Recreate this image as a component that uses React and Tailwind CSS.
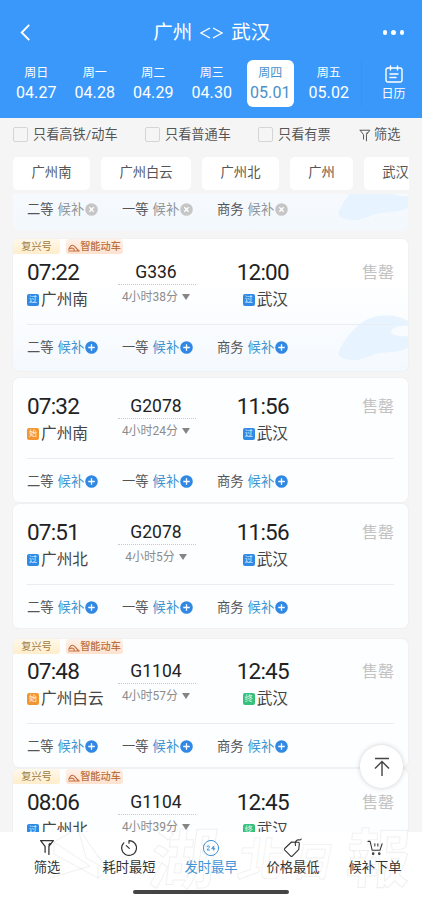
import React from 'react';

const DATES = [
  { day: '周日', date: '04.27' },
  { day: '周一', date: '04.28' },
  { day: '周二', date: '04.29' },
  { day: '周三', date: '04.30' },
  { day: '周四', date: '05.01', active: true },
  { day: '周五', date: '05.02' },
];

const STATIONS = [
  { name: '广州南', width: 'w-[77px]' },
  { name: '广州白云', width: 'w-[90px]' },
  { name: '广州北', width: 'w-[77px]' },
  { name: '广州', width: 'w-[63px]' },
  { name: '武汉', width: 'w-[63px]' },
];

const TRAINS = [
  { no: 'G336', dep: '07:22', arr: '12:00', from: '广州南', to: '武汉', fromTag: '过', toTag: '过', time: '4小时38分', smart: true, tinted: true, box: 'mt-[8px] h-[132px] pt-[19px]' },
  { no: 'G2078', dep: '07:32', arr: '11:56', from: '广州南', to: '武汉', fromTag: '始', toTag: '过', time: '4小时24分', box: 'mt-[7px] h-[124px] pt-[14px]' },
  { no: 'G2078', dep: '07:51', arr: '11:56', from: '广州北', to: '武汉', fromTag: '过', toTag: '过', time: '4小时5分', box: 'mt-[2px] h-[124px] pt-[14px]' },
  { no: 'G1104', dep: '07:48', arr: '12:45', from: '广州白云', to: '武汉', fromTag: '始', toTag: '终', time: '4小时57分', smart: true, box: 'mt-[11px] h-[128px] pt-[18px]' },
  { no: 'G1104', dep: '08:06', arr: '12:45', from: '广州北', to: '武汉', fromTag: '过', toTag: '终', time: '4小时39分', smart: true, box: 'mt-[2px] h-[128px] pt-[19px]' },
];

const TAG_COLORS = {
  过: 'bg-[#2f8ae6]',
  始: 'bg-[#f39531]',
  终: 'bg-[#35c17c]',
};

const Funnel = ({ className }) => (
  <svg viewBox="0 0 14 16" className={className} fill="none" stroke="currentColor" strokeWidth="1.2" strokeLinejoin="round" strokeLinecap="round">
    <path d="M1 1.5h12L8.8 7v7.5M1 1.5 5.2 7v5.5M9.8 4.2 8.8 5.5" />
  </svg>
);

const TrainArt = () => (
  <svg viewBox="0 0 70 50" className="absolute bottom-[8px] right-0 h-[50px] w-[70px]">
    <path
      d="M1 38C7 25 20 8 36 4c12-3 26-1 34 4v5c-6-1-12 0-17 4-1 5 9 7 17 6v12c-7 4-17 4-27 5-9 1-19 8-28 7C5 47-2 43 1 38Z"
      fill="#e7f3fe"
    />
  </svg>
);

const Seats = ({ closed }) => (
  <div className="flex h-5 items-center text-[13.3px] text-[#555]">
    {['二等', '一等', '商务'].map((seat) => (
      <div key={seat} className="flex w-[95px] items-center">
        <span>{seat}</span>
        <span className={`ml-1 ${closed ? 'text-[#919497]' : 'text-[#3d93d0]'}`}>候补</span>
        <svg viewBox="0 0 12 12" className="mb-[2px] ml-[0.5px] h-[13px] w-[13px]">
          <circle cx="6" cy="6" r="5.8" fill={closed ? '#c6c6c6' : '#3088e4'} />
          <path d={closed ? 'M4 4l4 4M8 4l-4 4' : 'M6 3v6M3 6h6'} stroke="#fff" strokeWidth="1.2" />
        </svg>
      </div>
    ))}
  </div>
);

const Place = ({ tag, name }) => (
  <div className="flex h-[27px] items-center gap-[2px] text-[15.7px] text-[#444]">
    <span className={`flex h-3 w-3 items-center justify-center rounded-[2px] text-[8px] leading-none text-white/90 ${TAG_COLORS[tag]}`}>
      {tag}
    </span>
    <span>{name}</span>
  </div>
);

const TrainCard = ({ train }) => (
  <div
    className={`relative shrink-0 overflow-hidden rounded-[6px] px-[14px] shadow-[0_0_2px_rgba(0,0,0,0.07)] ${train.box} ${
      train.tinted ? 'bg-linear-to-b from-white from-30% to-[#f4f9fe]' : 'bg-[#fcfeff]'
    }`}
  >
    {train.tinted && <TrainArt />}
    {train.smart && (
      <div className="absolute left-0 top-0 flex h-[15px] items-center gap-[6px] text-[10.2px] leading-[15px]">
        <span className="h-full w-[47px] rounded-r-[3px] bg-linear-to-b from-[#fff8e8] to-[#ffedcc] text-center text-[#9a7a45]">复兴号</span>
        <span className="flex h-full w-[57px] items-center justify-center rounded-[3px] bg-linear-to-b from-[#fff1e8] to-[#fee2cf] font-medium text-[#bd713d]">
          <svg viewBox="0 0 12 8" className="mt-[3px] h-[8px] w-[12px]" fill="none" stroke="#c26a38" strokeWidth="1.1" strokeLinecap="round">
            <path d="M.8 5.500C1.500 3 2.800 1 4.800 1.200 7 1.400 7.500 4.500 11 6.800M2 4.500c2-.8 4-.3 4.200 1.500M.8 7h10.400" />
          </svg>
          智能动车
        </span>
      </div>
    )}
    <div className="relative flex h-[66px]">
      <div className="w-[91px] whitespace-nowrap">
        <div className="h-7 text-[22.5px] leading-7 tracking-[-0.8px] text-[#222]">{train.dep}</div>
        <Place tag={train.fromTag} name={train.from} />
      </div>
      <div className="flex w-[78px] flex-col items-center">
        <div className="h-[27px] w-full border-b border-dotted border-[#c9c9c9] pr-[2px] pt-[1px] text-center text-[17.5px] leading-[26px] text-[#222]">{train.no}</div>
        <div className="flex h-6 items-center gap-1 pr-[2px] text-[12px] text-[#8c8c8c]">
          {train.time}
          <svg viewBox="0 0 8 6" className="h-[6px] w-[8px]"><path d="M0 0h8L4 6Z" fill="#858585" /></svg>
        </div>
      </div>
      <div className="flex w-[92px] flex-col items-end">
        <div className="-mr-[0.8px] h-7 text-[22.5px] leading-7 tracking-[-0.8px] text-[#222]">{train.arr}</div>
        <Place tag={train.toTag} name={train.to} />
      </div>
      <div className="ml-auto pt-[3px] text-[16px] leading-6 text-[#c2c2c2]">售罄</div>
    </div>
    <div className="relative h-px bg-[#e9edf0]" />
    <div className="relative mt-[13px]">
      <Seats />
    </div>
  </div>
);

const TABS = [
  { label: '筛选', icon: <Funnel className="h-[17px] w-[16px]" /> },
  {
    label: '耗时最短',
    icon: (
      <svg viewBox="0 0 18 18" className="h-[18px] w-[18px]" fill="none" stroke="currentColor" strokeWidth="1.2" strokeLinecap="round">
        <path d="M9 1.6v2.6M9 1.6A7.4 7.4 0 1 1 3.8 3.8M6.3 6.6l3 2.8" />
      </svg>
    ),
  },
  {
    label: '发时最早',
    active: true,
    icon: (
      <svg viewBox="0 0 18 18" className="h-[18px] w-[18px]" fill="none" stroke="currentColor" strokeWidth="1" strokeLinecap="round">
        <circle cx="9" cy="9" r="7.6" />
        <path d="M5 7.6c.5-1.2 2.4-1 2.4.3C7.400 9 5.400 9.800 5 11h2.600M11.700 11V7l-2 2.800h3.200" />
      </svg>
    ),
  },
  {
    label: '价格最低',
    icon: (
      <svg viewBox="0 0 20 20" className="h-[20px] w-[20px]" fill="none" stroke="currentColor" strokeWidth="1.1" strokeLinecap="round" strokeLinejoin="round">
        <path d="M1.700 10.500 8.500 4l6.800.3q1 .1 1 1.200l-.5 5.800-6.500 6.800q-.8.700-1.500 0l-6-6q-.7-.8-.1-1.600ZM12.500 7.500c-.6-2.500 0-4.500 1.800-5.500 1.500-.6 3 .8 3.900-1" />
      </svg>
    ),
  },
  {
    label: '候补下单',
    icon: (
      <svg viewBox="0 0 18 18" className="h-[17px] w-[17px]" fill="none" stroke="currentColor" strokeWidth="1.1" strokeLinecap="round" strokeLinejoin="round">
        <path d="M1 2.500h2.300L5.500 12h8.200L16 5M8.300 5v2.500M11.500 5v2.500" />
        <circle cx="6.500" cy="15.500" r=".8" />
        <circle cx="13" cy="15.500" r=".8" />
      </svg>
    ),
  },
];

// faint outlined newspaper mark that lies over the tab bar
const Watermark = () => (
  <svg viewBox="0 0 422 80" className="pointer-events-none absolute bottom-0 left-0 h-[80px] w-full" fill="none" stroke="#777" strokeOpacity="0.11" strokeWidth="1">
    <path d="m54 22 24-14 30 42-10 8-44-24ZM78 8l8 30 22 12M54 22l36 24M98 58V46M50 58l40-12" />
    <g style={{ fontFamily: '"Noto Sans CJK TC", sans-serif', fontWeight: 700 }}>
      <text x="148" y="63" fontSize="66" transform="skewX(-8) translate(8 0)">湖</text>
      <text x="236" y="56" fontSize="46" transform="skewX(-8) translate(8 0)">北</text>
      <text x="293" y="56" fontSize="40" transform="skewX(-12) translate(10 0)">日</text>
      <text x="345" y="62" fontSize="64" transform="skewX(-4) translate(4 0)">報</text>
    </g>
  </svg>
);

const App = () => (
  <div className="relative flex h-[900px] w-[422px] flex-col overflow-hidden bg-[#f5f5f5] font-['Roboto','Noto_Sans_CJK_SC',sans-serif]">
    <header className="h-[118px] shrink-0 bg-[#3b98fb] text-white">
      <div className="flex h-[60px] items-center justify-between pl-[19px] pr-[18px] pt-[5px]">
        <svg viewBox="0 0 12 18" className="h-[17px] w-[12px]" fill="none" stroke="currentColor" strokeWidth="2">
          <path d="m10.500 1-8 8 8 8" />
        </svg>
        <h1 className="ml-[10px] flex items-center gap-2 text-[19.5px]">
          <span>广州</span>
          <svg viewBox="0 0 23 12" className="h-[12px] w-[23px]" fill="none" stroke="currentColor" strokeWidth="1.300">
            <path d="M10 1 1 6l9 5M13 1l9 5-9 5" />
          </svg>
          <span>武汉</span>
        </h1>
        <div className="flex gap-[4px]">
          <i className="h-[4.500px] w-[4.500px] rounded-full bg-white" />
          <i className="h-[4.500px] w-[4.500px] rounded-full bg-white" />
          <i className="h-[4.500px] w-[4.500px] rounded-full bg-white" />
        </div>
      </div>
      <div className="flex pl-[7px]">
        {DATES.map(({ day, date, active }) => (
          <div key={date} className="flex w-[58.500px] justify-center">
            <div className={`flex h-[47px] w-[47px] flex-col items-center rounded-[6px] pt-[3px] ${active ? 'bg-white text-[#4a90c8]' : ''}`}>
              <span className="text-[12px] leading-[20px]">{day}</span>
              <span className="text-[16px] leading-[19px] tracking-[0.1px]">{date}</span>
            </div>
          </div>
        ))}
        <div className="ml-[3px] flex flex-1 flex-col items-center border-l border-[#4290eb] pl-[3px] pt-[5px]">
          <svg viewBox="0 0 18 18" className="h-[18px] w-[18px]" fill="none" stroke="currentColor" strokeWidth="1.400" strokeLinecap="round">
            <rect x="1" y="3" width="16" height="14" rx="2" />
            <path d="M5.500 1v4M12.500 1v4M5 9h8M5 12.500h6" />
          </svg>
          <span className="mt-[2px] text-[12px] leading-[18px]">日历</span>
        </div>
      </div>
    </header>

    <div className="flex h-[34px] shrink-0 items-center pl-[13px] text-[13.200px] text-[#555]">
      {[
        ['只看高铁/动车', 'w-[132px]'],
        ['只看普通车', 'w-[113px]'],
        ['只看有票', 'w-[101px]'],
      ].map(([label, width]) => (
        <div key={label} className={`flex items-center gap-[5px] ${width}`}>
          <span className="h-[15px] w-[15px] shrink-0 rounded-[2px] border border-[#d5d5d5]" />
          <span className="whitespace-nowrap">{label}</span>
        </div>
      ))}
      <Funnel className="h-[13px] w-[12px]" />
      <span className="ml-[3px]">筛选</span>
    </div>

    <div className="mx-[13px] mt-[5px] flex shrink-0 gap-[11px] overflow-hidden">
      {STATIONS.map(({ name, width }) => (
        <div key={name} className={`h-[33px] shrink-0 rounded-[5px] bg-white text-center text-[13.300px] leading-[32px] text-[#555] ${width}`}>
          {name}
        </div>
      ))}
    </div>

    <main className="flex min-h-0 flex-1 flex-col overflow-hidden pl-[13px] pr-[14px] pt-[4px]">
      <div className="relative h-[37px] shrink-0 overflow-hidden rounded-b-[6px] bg-linear-to-b from-[#f6faff] to-[#f3f8fd] px-[14px] pt-[6px]">
        <TrainArt />
        <div className="relative">
          <Seats closed />
        </div>
      </div>
      {TRAINS.map((train) => (
        <TrainCard key={train.dep} train={train} />
      ))}
    </main>

    <button type="button" className="absolute left-[360px] top-[745px] flex h-[43px] w-[43px] items-center justify-center rounded-full bg-white text-[#444] shadow-[0_0_5px_rgba(0,0,0,0.2)]">
      <svg viewBox="0 0 18 20" className="h-[20px] w-[18px]" fill="none" stroke="currentColor" strokeWidth="1.400">
        <path d="M2 1.500h14M9 19V4.500M2 11.500l7-7 7 7" />
      </svg>
    </button>

    <nav className="h-[68px] shrink-0 bg-white">
      <div className="flex px-[6px]">
        {TABS.map(({ label, icon, active }) => (
          <div key={label} className={`flex w-[82px] flex-col items-center text-[13.300px] ${active ? 'text-[#3f94d8]' : 'text-[#333]'}`}>
            <span className="flex h-[27px] items-center pt-[4px]">{icon}</span>
            <span className="leading-[17px]">{label}</span>
          </div>
        ))}
      </div>
      <div className="mx-auto mt-[14px] h-[4px] w-[156px] rounded-full bg-[#444]" />
    </nav>
    <Watermark />
  </div>
);

export default App;
